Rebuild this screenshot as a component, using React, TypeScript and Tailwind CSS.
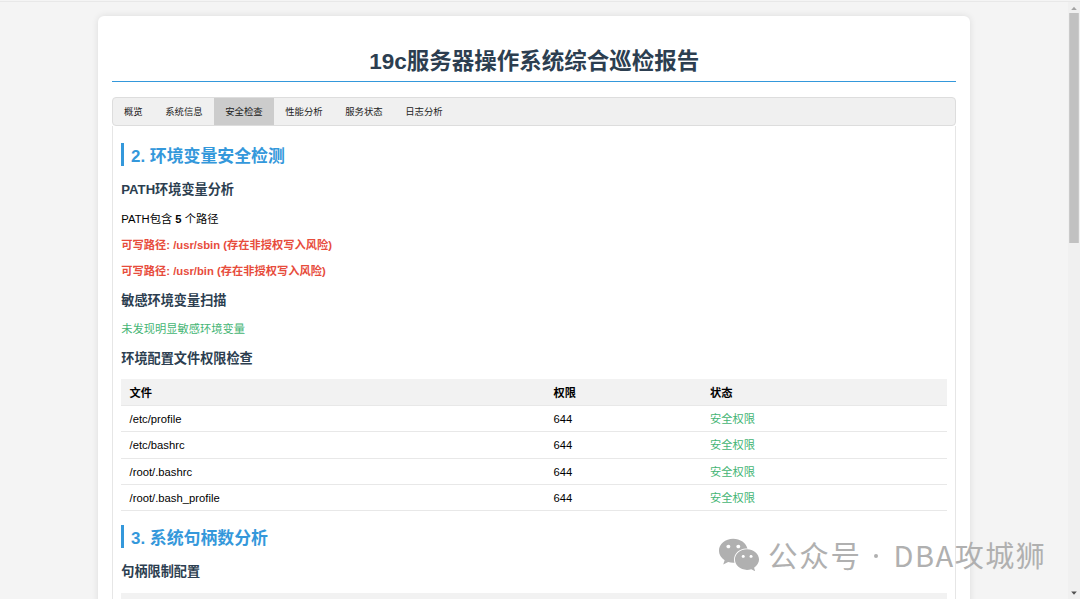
import React from 'react';
import { FaWeixin } from 'react-icons/fa';

const tabs = ['概览', '系统信息', '安全检查', '性能分析', '服务状态', '日志分析'];

const files = ['/etc/profile', '/etc/bashrc', '/root/.bashrc', '/root/.bash_profile'];

const SectionTitle: React.FC<{ children: React.ReactNode }> = ({ children }) => (
  <h2 className="h-[23px] border-l-[3px] border-[#3498db] pl-[6.7px] text-[16.9px] leading-[27px] font-bold text-[#3498db]">
    {children}
  </h2>
);

const SubTitle: React.FC<{ children: React.ReactNode }> = ({ children }) => (
  <h3 className="h-4 text-[13.15px] leading-4 font-bold text-[#2c3e50]">{children}</h3>
);

const Scrollbar: React.FC = () => (
  <div className="flex w-3 shrink-0 flex-col items-center bg-[#f0f0f0]">
    <svg className="h-[11px] w-3" viewBox="0 0 12 11">
      <path d="M3.2 8 L6 4.8 L8.8 8 Z" fill="#a3a3a3" />
    </svg>
    <div className="h-[230px] w-2.5 border-x border-[#cacaca] bg-[#c1c1c1]"></div>
    <svg className="mt-auto h-[11px] w-3" viewBox="0 0 12 11">
      <path d="M3.2 3.6 L8.8 3.6 L6 6.8 Z" fill="#505050" />
    </svg>
  </div>
);

const App: React.FC = () => {
  return (
    <div className="relative flex h-[599px] flex-col overflow-hidden bg-[#f4f4f4] font-['Liberation_Sans','Noto_Sans_CJK_SC',sans-serif] text-black">
      <div className="mt-px h-px shrink-0 bg-[#e8e8e8]"></div>
      <div className="flex min-h-0 flex-1">
        <div className="flex-1 overflow-hidden pt-[13.5px] pl-[98.3px]">
          <main className="flex h-[620px] w-[872px] flex-col rounded-[6px] bg-white px-[14px] shadow-[0_0_7px_rgba(0,0,0,0.1)]">
            <h1 className="mt-[30px] h-[36.5px] border-b border-[#3498db] text-center text-[22.5px] leading-[31px] font-bold text-[#2c3e50]">
              19c服务器操作系统综合巡检报告
            </h1>

            <nav className="mt-[15px] flex h-[29px] shrink-0 overflow-hidden rounded-[4px] border border-[#dddddd] bg-[#f0f0f0]">
              {tabs.map((tab) => (
                <button
                  key={tab}
                  className={
                    tab === '安全检查'
                      ? 'bg-[#cccccc] px-[11.25px] pt-[2px] text-[9.4px] text-[#222222]'
                      : 'px-[11.25px] pt-[2px] text-[9.4px] text-[#222222] first:pl-[10.6px]'
                  }
                >
                  {tab}
                </button>
              ))}
            </nav>

            <section className="flex-1 border-x border-[#e6e6e6] px-2 pt-[17px] text-[11.25px] leading-4">
              <SectionTitle>2. 环境变量安全检测</SectionTitle>
              <div className="mt-4">
                <SubTitle>PATH环境变量分析</SubTitle>
              </div>
              <p className="mt-[12.6px] h-4">
                PATH包含 <b>5</b> 个路径
              </p>
              <p className="mt-[10.4px] h-4 font-bold text-[#e74c3c]">可写路径: /usr/sbin (存在非授权写入风险)</p>
              <p className="mt-[10px] h-4 font-bold text-[#e74c3c]">可写路径: /usr/bin (存在非授权写入风险)</p>
              <div className="mt-[14px]">
                <SubTitle>敏感环境变量扫描</SubTitle>
              </div>
              <p className="mt-3 h-4 text-[#45b574]">未发现明显敏感环境变量</p>
              <div className="mt-[14px]">
                <SubTitle>环境配置文件权限检查</SubTitle>
              </div>

              <table className="mt-3 w-full table-fixed border-collapse text-left">
                <colgroup>
                  <col className="w-[424px]" />
                  <col className="w-[156.5px]" />
                  <col />
                </colgroup>
                <thead>
                  <tr className="h-[26.4px] border-b border-[#e8e8e8] bg-[#f2f2f2]">
                    <th className="px-[8.3px] pt-[2px] pb-0">文件</th>
                    <th className="px-[8.3px] pt-[2px] pb-0">权限</th>
                    <th className="px-[8.3px] pt-[2px] pb-0">状态</th>
                  </tr>
                </thead>
                <tbody>
                  {files.map((file) => (
                    <tr key={file} className="h-[26.4px] border-b border-[#e8e8e8]">
                      <td className="px-[8.3px] pt-px pb-0">{file}</td>
                      <td className="px-[8.3px] pt-px pb-0">644</td>
                      <td className="px-[8.3px] pt-px pb-0 text-[#45b574]">安全权限</td>
                    </tr>
                  ))}
                </tbody>
              </table>

              <div className="mt-[13.6px]">
                <SectionTitle>3. 系统句柄数分析</SectionTitle>
              </div>
              <div className="mt-4">
                <SubTitle>句柄限制配置</SubTitle>
              </div>
              <div className="mt-[13px] h-[26px] bg-[#f2f2f2]"></div>
            </section>
          </main>
        </div>
        <Scrollbar />
      </div>

      {/* watermark */}
      <div className="pointer-events-none absolute top-[534px] left-[718px] flex h-10 items-center whitespace-nowrap text-[#b0b0b0] font-['Noto_Sans_CJK_SC',sans-serif] text-[29px] leading-10">
        <FaWeixin className="mt-px h-[38px] w-[42px]" />
        <span className="ml-2 w-[105.5px] text-[29.5px] tracking-[1.7px]">公众号</span>
        <span className="mt-1 h-1 w-1 rounded-full bg-[#b0b0b0]"></span>
        <span className="ml-[16px] tracking-[1.5px]">DBA攻城狮</span>
      </div>
    </div>
  );
};

export default App;
